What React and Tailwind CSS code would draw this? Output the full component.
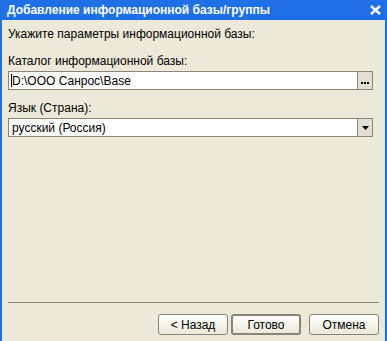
const font = { fontFamily: '"Liberation Sans", Arial, sans-serif' };

function XpButton({ children, primary }) {
  return (
    <div
      className={
        "w-[70px] h-[21px] rounded-[3px] flex items-center justify-center text-[12px] text-black bg-gradient-to-b from-[#ffffff] to-[#ece9d8] " +
        (primary ? "border-2 border-[#8a8677]" : "border border-[#8a8677]")
      }
    >
      {children}
    </div>
  );
}

export default function App() {
  return (
    <div className="w-[387px] h-[341px] bg-[#ece9d8] flex flex-col border-x-2 border-[#1f6fe6]" style={font}>
      <div className="h-[20px] bg-[#1f6fe6] flex items-center justify-between pl-[5px] pr-[4px] shrink-0">
        <span className="text-white font-bold text-[12px]">
          Добавление информационной базы/группы
        </span>
        <svg width="11" height="10" viewBox="0 0 11 10">
          <path d="M1 1 L10 9 M10 1 L1 9" stroke="#fff" strokeWidth="2.4" />
        </svg>
      </div>

      <div className="flex-1 flex flex-col px-[6px]">
        <div className="mt-[8px] h-[13px] leading-[13px] text-[12px] text-black">
          Укажите параметры информационной базы:
        </div>

        <div className="mt-[14px] h-[13px] leading-[13px] text-[12px] text-black">
          Каталог информационной базы:
        </div>
        <div className="mt-[3px] w-[365px] h-[19px] flex border border-[#8a8677] bg-white">
          <div className="flex-1 flex items-center pl-[2px] text-[12px] text-black">
            <span className="w-px h-[13px] bg-black" />
            D:\ООО Санрос\Base
          </div>
          <div className="w-[15px] border-l border-[#8a8677] bg-[#e3dfd3] flex items-end justify-center pb-[5px]">
            <span className="flex gap-[1px]">
              <span className="w-[2px] h-[2px] bg-black" />
              <span className="w-[2px] h-[2px] bg-black" />
              <span className="w-[2px] h-[2px] bg-black" />
            </span>
          </div>
        </div>

        <div className="mt-[12px] h-[13px] leading-[13px] text-[12px] text-black">
          Язык (Страна):
        </div>
        <div className="mt-[3px] w-[365px] h-[19px] flex border border-[#8a8677] bg-white">
          <div className="flex-1 flex items-center pl-[3px] text-[12px] text-black">русский (Россия)</div>
          <div className="w-[15px] border-l border-[#8a8677] bg-[#e3dfd3] flex items-center justify-center">
            <svg width="7" height="4" viewBox="0 0 7 4">
              <path d="M0 0 H7 L3.5 4 Z" fill="#000" />
            </svg>
          </div>
        </div>

        <div className="flex-1" />
        <div className="h-px bg-[#8a8677]" />
        <div className="mt-[11px] mb-[6px] flex justify-end gap-[3px]">
          <XpButton>&lt; Назад</XpButton>
          <XpButton primary>Готово</XpButton>
          <div className="w-[2px]" />
          <XpButton>Отмена</XpButton>
        </div>
      </div>
    </div>
  );
}
